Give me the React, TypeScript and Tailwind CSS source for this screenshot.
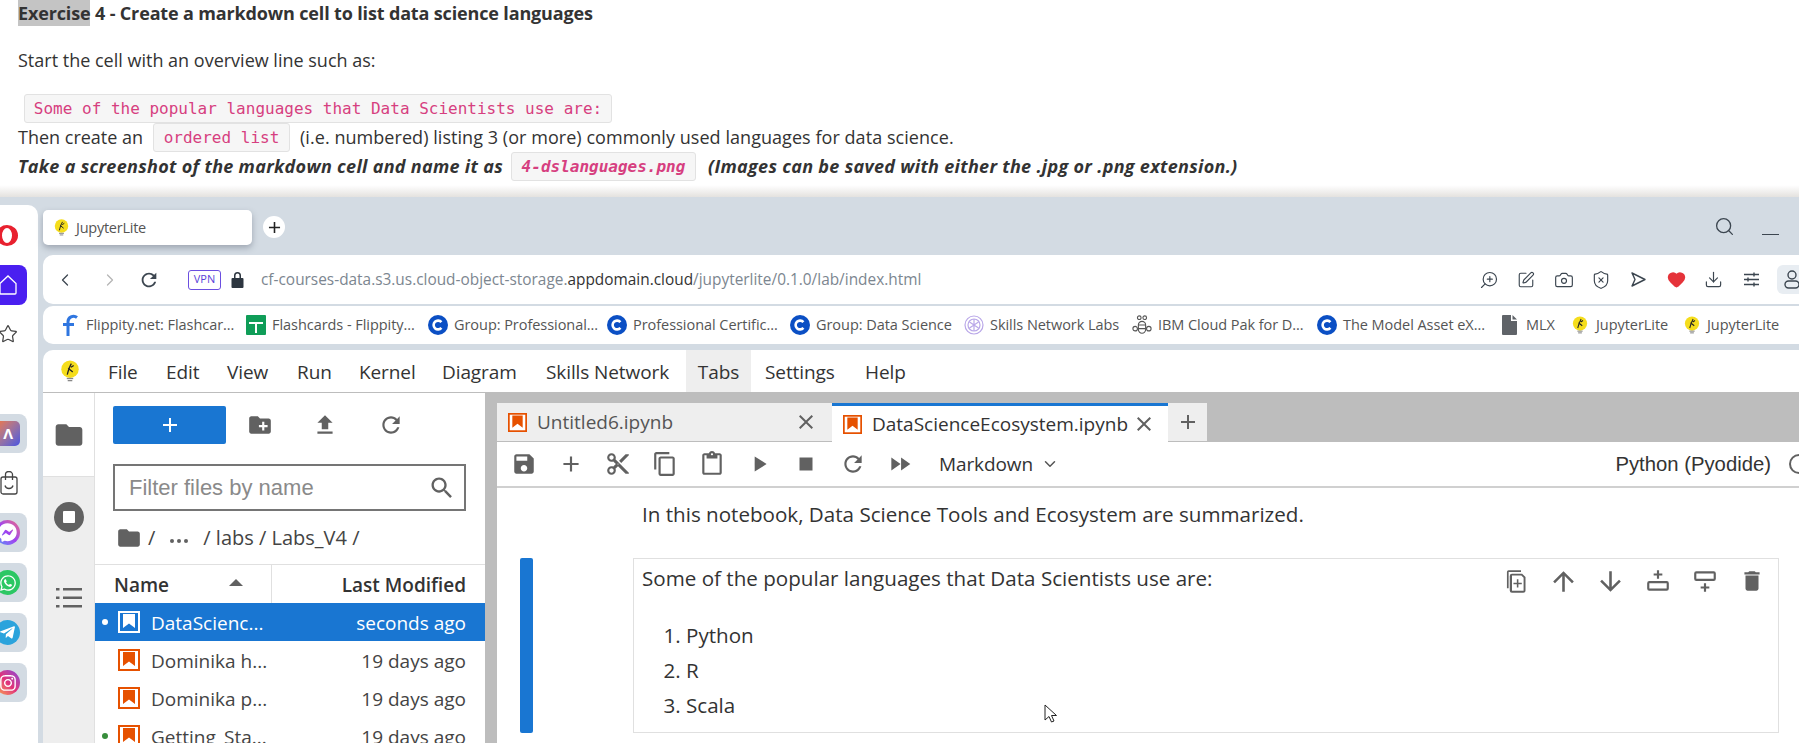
import { ChevronDown, ChevronLeft, ChevronRight, Download, Search, Camera, ShieldX, ZoomIn, SquarePen, Heart, Star } from 'lucide-react';
import { FaWhatsapp, FaTelegramPlane, FaFacebookMessenger, FaInstagram } from 'react-icons/fa';

const sans = "font-['Open_Sans',sans-serif]";
const chip = "h-[29px] pt-[1px] flex items-center justify-center bg-[#f6f6f6] border border-[#e2e2e2] rounded-[3px] text-[16px] tracking-normal text-[#d63f80] font-['DejaVu_Sans_Mono',monospace]";

const paths: Record<string, string> = {
    folder: 'M10 4H4c-1.1 0-2 .9-2 2v12c0 1.1.9 2 2 2h16c1.1 0 2-.9 2-2V8c0-1.1-.9-2-2-2h-8l-2-2z',
    newFolder: 'M20 6h-8l-2-2H4c-1.11 0-1.99.89-1.99 2L2 18c0 1.11.89 2 2 2h16c1.11 0 2-.89 2-2V8c0-1.11-.89-2-2-2zm-1 8h-3v3h-2v-3h-3v-2h3V9h2v3h3v2z',
    upload: 'M9 16h6v-6h4l-7-7-7 7h4zm-4 2h14v2H5z',
    refresh: 'M17.65 6.35C16.2 4.9 14.21 4 12 4c-4.42 0-7.99 3.58-7.99 8s3.57 8 7.99 8c3.73 0 6.84-2.55 7.73-6h-2.08c-.82 2.33-3.04 4-5.65 4-3.31 0-6-2.69-6-6s2.69-6 6-6c1.66 0 3.14.69 4.22 1.78L13 11h7V4l-2.35 2.35z',
    save: 'M17 3H5c-1.11 0-2 .9-2 2v14c0 1.1.89 2 2 2h14c1.1 0 2-.9 2-2V7l-4-4zm-5 16c-1.66 0-3-1.34-3-3s1.34-3 3-3 3 1.34 3 3-1.34 3-3 3zm3-10H5V5h10v4z',
    add: 'M19 13h-6v6h-2v-6H5v-2h6V5h2v6h6v2z',
    cut: 'M9.64 7.64c.23-.5.36-1.05.36-1.64 0-2.21-1.79-4-4-4S2 3.79 2 6s1.79 4 4 4c.59 0 1.14-.13 1.64-.36L10 12l-2.36 2.36C7.14 14.13 6.59 14 6 14c-2.21 0-4 1.79-4 4s1.79 4 4 4 4-1.79 4-4c0-.59-.13-1.14-.36-1.64L12 14l7 7h3v-1L9.64 7.64zM6 8c-1.1 0-2-.89-2-2s.9-2 2-2 2 .89 2 2-.9 2-2 2zm0 12c-1.1 0-2-.89-2-2s.9-2 2-2 2 .89 2 2-.9 2-2 2zm6-7.5c-.28 0-.5-.22-.5-.5s.22-.5.5-.5.5.22.5.5-.22.5-.5.5zM19 3l-6 6 2 2 7-7V3z',
    copy: 'M16 1H4c-1.1 0-2 .9-2 2v14h2V3h12V1zm3 4H8c-1.1 0-2 .9-2 2v14c0 1.1.9 2 2 2h11c1.1 0 2-.9 2-2V7c0-1.1-.9-2-2-2zm0 16H8V7h11v14z',
    paste: 'M19 2h-4.18C14.4.84 13.3 0 12 0c-1.3 0-2.4.84-2.82 2H5c-1.1 0-2 .9-2 2v16c0 1.1.9 2 2 2h14c1.1 0 2-.9 2-2V4c0-1.1-.9-2-2-2zm-7 0c.55 0 1 .45 1 1s-.45 1-1 1-1-.45-1-1 .45-1 1-1zm7 18H5V4h2v3h10V4h2v16z',
    run: 'M8 5v14l11-7z',
    stop: 'M6 6h12v12H6z',
    fastForward: 'M4 18l8.5-6L4 6v12zm9-12v12l8.5-6L13 6z',
    trash: 'M6 19c0 1.1.9 2 2 2h8c1.1 0 2-.9 2-2V7H6v12zM19 4h-3.5l-1-1h-5l-1 1H5v2h14V4z',
    up: 'M4 12l1.41 1.41L11 7.83V20h2V7.83l5.58 5.59L20 12l-8-8-8 8z',
    down: 'M20 12l-1.41-1.41L13 16.17V4h-2v12.17l-5.58-5.59L4 12l8 8 8-8z',
    search: 'M15.5 14h-.79l-.28-.27C15.41 12.59 16 11.11 16 9.5 16 5.91 13.09 3 9.5 3S3 5.91 3 9.5 5.91 16 9.5 16c1.61 0 3.09-.59 4.23-1.57l.27.28v.79l5 4.99L20.49 19l-4.99-5zm-6 0C7.01 14 5 11.99 5 9.5S7.01 5 9.5 5 14 7.01 14 9.5 11.99 14 9.5 14z',
    close: 'M19 6.41L17.59 5 12 10.59 6.41 5 5 6.41 10.59 12 5 17.59 6.41 19 12 13.41 17.59 19 19 17.59 13.41 12z',
    duplicate: 'M5 3v15H3.500V3.500A1.500 1.500 0 0 1 5 2h11v1.500H5zM8 5h9l3 3v12a2 2 0 0 1-2 2H8a2 2 0 0 1-2-2V7a2 2 0 0 1 2-2zm0 1.700V20.300h10.300V8.700L16.300 6.700H8zM12.300 10h1.400v3h3v1.400h-3v3h-1.400v-3h-3V13h3z',
    insertAbove: 'M11 2h2v3h3v2h-3v3h-2V7H8V5h3zM4 12h16a2 2 0 0 1 2 2v5a2 2 0 0 1-2 2H4a2 2 0 0 1-2-2v-5a2 2 0 0 1 2-2zm0 2v5h16v-5z',
    insertBelow: 'M4 3h16a2 2 0 0 1 2 2v5a2 2 0 0 1-2 2H4a2 2 0 0 1-2-2V5a2 2 0 0 1 2-2zm0 2v5h16V5zM11 14h2v3h3v2h-3v3h-2v-3H8v-2h3z',
};

const MuiIcon = ({ name, size = 24, className = 'fill-[#616161]' }: any) => (
    <svg width={size} height={size} viewBox="0 0 24 24" className={className}>
        <path d={paths[name]} />
    </svg>
);

const Bulb = ({ size = 18 }: any) => (
    <svg width={size} height={size} viewBox="0 0 24 24" className="shrink-0">
        <circle cx="12" cy="10" r="9.500" fill="#f5dd1c" />
        <path d="M9 16 C10 12 11 8 13.500 4 M10 9 L15 13 M13 8 L16 6" stroke="#222" strokeWidth="1.400" fill="none" />
        <rect x="8.500" y="19.500" width="7" height="1.400" fill="#888" />
        <rect x="9.500" y="21.800" width="5" height="1.400" fill="#888" />
    </svg>
);

const Coursera = () => (
    <svg width="20" height="20" viewBox="0 0 20 20" className="shrink-0">
        <circle cx="10" cy="10" r="10" fill="#0b4fc4" />
        <path d="M13.400 7.200a4.400 4.400 0 1 0 0 5.600" stroke="#fff" strokeWidth="2.600" fill="none" />
    </svg>
);

const NotebookIcon = ({ light = false, size = 22 }: any) => (
    <svg width={size} height={size} viewBox="0 0 22 22" className="shrink-0">
        <rect x="1" y="1" width="20" height="20" fill={light ? 'none' : '#fff'} stroke={light ? '#fff' : '#e65100'} strokeWidth="2" />
        <path d="M5 3h12v14l-6-4.500L5 17z" fill={light ? '#fff' : '#e65100'} />
    </svg>
);

const bookmarks = [
    {
        label: 'Flippity.net: Flashcar...', w: 'w-[186px]', icon: (
            <svg width="20" height="22" viewBox="0 0 20 22" fill="none" stroke="#2f76e0" strokeWidth="3" className="shrink-0">
                <path d="M8 22V8a5.500 5.500 0 0 1 9-4.500M3 10.500h11" />
            </svg>
        ),
    },
    {
        label: 'Flashcards - Flippity...', w: 'w-[182px]', icon: (
            <svg width="20" height="20" viewBox="0 0 20 20" className="shrink-0">
                <rect width="20" height="20" rx="1" fill="#0f9d58" />
                <path d="M3 7h14v2H11v9H9V9H3z" fill="#fff" />
            </svg>
        ),
    },
    { label: 'Group: Professional...', w: 'w-[179px]', icon: <Coursera /> },
    { label: 'Professional Certific...', w: 'w-[183px]', icon: <Coursera /> },
    { label: 'Group: Data Science', w: 'w-[174px]', icon: <Coursera /> },
    {
        label: 'Skills Network Labs', w: 'w-[168px]', icon: (
            <svg width="20" height="20" viewBox="0 0 20 20" className="shrink-0" fill="none" stroke="#b9a7e8" strokeWidth="1.200">
                <circle cx="10" cy="10" r="9" />
                <circle cx="10" cy="10" r="6" />
                <path d="M10 4v12M5.500 7l9 6M14.500 7l-9 6" />
            </svg>
        ),
    },
    {
        label: 'IBM Cloud Pak for D...', w: 'w-[185px]', icon: (
            <svg width="20" height="20" viewBox="0 0 22 22" className="shrink-0" fill="none" stroke="#555" strokeWidth="1.200">
                <circle cx="8" cy="3" r="2" />
                <circle cx="14" cy="3" r="2" />
                <rect x="7" y="7" width="8" height="13" rx="4" />
                <path d="M7 11h8M7 15h8" />
                <circle cx="3.500" cy="15" r="2.500" />
                <circle cx="18.500" cy="15" r="2.500" />
            </svg>
        ),
    },
    { label: 'The Model Asset eX...', w: 'w-[183px]', icon: <Coursera /> },
    {
        label: 'MLX', w: 'w-[70px]', icon: (
            <svg width="20" height="20" viewBox="0 0 20 20" className="shrink-0">
                <path d="M3 0h8v6h6v13a1 1 0 0 1-1 1H3a1 1 0 0 1-1-1V1a1 1 0 0 1 1-1zM12.500 0L17 4.500h-4.500z" fill="#5f6368" />
            </svg>
        ),
    },
    { label: 'JupyterLite', w: 'w-[113px]', icon: <span className="w-[20px] flex justify-center"><Bulb /></span> },
    { label: 'JupyterLite', w: 'w-[90px]', icon: <span className="w-[20px] flex justify-center"><Bulb /></span> },
];

const menus = [
    { label: 'File', w: 'w-[58px]' },
    { label: 'Edit', w: 'w-[61px]' },
    { label: 'View', w: 'w-[70px]' },
    { label: 'Run', w: 'w-[62px]' },
    { label: 'Kernel', w: 'w-[83px]' },
    { label: 'Diagram', w: 'w-[104px]' },
    { label: 'Skills Network', w: 'w-[140px]' },
];

const files = [
    { name: 'Dominika h...', time: '19 days ago' },
    { name: 'Dominika p...', time: '19 days ago' },
    { name: 'Getting_Sta...', time: '19 days ago', dot: true },
];

const toolbar = [
    { name: 'save', size: 26 },
    { name: 'add', size: 26 },
    { name: 'cut', size: 26 },
    { name: 'copy', size: 26 },
    { name: 'paste', size: 26 },
    { name: 'run', size: 26 },
    { name: 'stop', size: 26 },
    { name: 'refresh', size: 26 },
    { name: 'fastForward', size: 26 },
];

const cellTools = [
    { name: 'duplicate', size: 27 },
    { name: 'up', size: 31 },
    { name: 'down', size: 31 },
    { name: 'insertAbove', size: 26 },
    { name: 'insertBelow', size: 26 },
    { name: 'trash', size: 26 },
];

const AppTile = ({ children }: any) => (
    <div className="w-[27px] h-[39px] bg-[#d3dbe3] rounded-r-[8px] flex items-center justify-end pr-[7px] overflow-hidden">
        {children}
    </div>
);

const BrowserIcon = ({ children }: any) => (
    <div className="w-[37.5px] flex items-center justify-center text-[#3c4650]">{children}</div>
);

function App() {
    return (
        <div className={`w-[1799px] h-[743px] overflow-hidden flex flex-col bg-white text-[#212529] ${sans}`}>

            {/* Instructions above the screenshot */}
            <section className="h-[197px] shrink-0 pl-[18px] text-[18px] bg-gradient-to-b from-white from-[94%] to-[#e4e2df]">
                <h2 className="h-[26px] leading-[26px] font-bold tracking-[-0.15px] text-[#333]">
                    <span className="bg-[#c4c4c4] inline-block">Exercise</span> 4 - Create a markdown cell to list data science languages
                </h2>
                <p className="mt-[21px] h-[26px] leading-[26px] text-[#333]">Start the cell with an overview line such as:</p>
                <div className={`mt-[21px] ml-[6px] w-[588px] ${chip}`}>
                    Some of the popular languages that Data Scientists use are:
                </div>
                <div className="h-[29px] flex items-center text-[#333]">
                    <span className="w-[135px]">Then create an</span>
                    <code className={`w-[137px] ${chip}`}>ordered list</code>
                    <span className="ml-[10px] tracking-[0.05px]">(i.e. numbered) listing 3 (or more) commonly used languages for data science.</span>
                </div>
                <div className="h-[29px] flex items-center font-bold italic tracking-[0.3px] text-[#333]">
                    <span className="w-[493px] whitespace-nowrap">Take a screenshot of the markdown cell and name it as</span>
                    <code className={`w-[185px] ${chip}`}>4-dslanguages.png</code>
                    <span className="ml-[12px]">(Images can be saved with either the .jpg or .png extension.)</span>
                </div>
            </section>

            {/* Browser window */}
            <div className="flex-1 flex bg-[#d3dbe3] min-h-0">

                {/* Opera sidebar */}
                <aside className="w-[38px] mt-[8px] shrink-0 bg-white rounded-tr-[10px] flex flex-col overflow-hidden">
                    <div className="h-[60px] flex items-center justify-end pr-[20px]">
                        <div className="w-[22px] h-[21px] shrink-0 rounded-[50%] border-x-[6px] border-y-[3px] border-[#e8212f]" />
                    </div>
                    <div className="w-[27px] h-[40px] bg-[#4a1ff0] rounded-r-[8px] flex items-center justify-end pr-[9px] overflow-hidden">
                        <svg width="20" height="22" viewBox="0 0 20 22" fill="none" stroke="#fff" strokeWidth="1.300" className="shrink-0">
                            <path d="M2 9.500L10 2l8 7.500V19a1 1 0 0 1-1 1H3a1 1 0 0 1-1-1z" />
                        </svg>
                    </div>
                    <div className="mt-[17px] h-[24px] flex items-center justify-start">
                        <Star size={20} strokeWidth={1.500} className="text-[#444] -ml-[2px]" />
                    </div>
                    <div className="mt-[68px] flex flex-col">
                        <AppTile>
                            <div className="w-[24px] h-[25px] rounded-[5px] bg-gradient-to-br from-[#f0763a] to-[#4a50e0] text-white text-[15px] font-bold flex items-center justify-center shrink-0">Λ</div>
                        </AppTile>
                        <div className="h-[60px] flex items-center">
                            <svg width="18" height="24" viewBox="0 0 18 24" fill="none" stroke="#444" strokeWidth="1.300" className="shrink-0">
                                <rect x="1" y="6" width="16" height="17" rx="2" />
                                <path d="M5.500 9V3.500a3.500 3 0 0 1 7 0V9M5 14.500c1 4 7 4 8 0" />
                            </svg>
                        </div>
                        <AppTile><div className="w-[25px] h-[25px] shrink-0 rounded-full bg-gradient-to-tr from-[#2f8ff8] via-[#a040f0] to-[#f0607a] flex items-center justify-center"><FaFacebookMessenger className="text-white text-[19px]" /></div></AppTile>
                        <div className="h-[11px]" />
                        <AppTile><div className="w-[25px] h-[25px] shrink-0 rounded-full bg-[#2cc764] flex items-center justify-center"><FaWhatsapp className="text-white text-[18px]" /></div></AppTile>
                        <div className="h-[11px]" />
                        <AppTile><div className="w-[25px] h-[25px] shrink-0 rounded-full bg-[#2ba3dc] flex items-center justify-center"><FaTelegramPlane className="text-white text-[17px]" /></div></AppTile>
                        <div className="h-[11px]" />
                        <AppTile><div className="w-[25px] h-[25px] shrink-0 rounded-full bg-gradient-to-tr from-[#f9a13a] via-[#e0307a] to-[#8a3ad8] flex items-center justify-center"><FaInstagram className="text-white text-[18px]" /></div></AppTile>
                    </div>
                </aside>

                <div className="flex-1 min-w-0 pl-[5px] flex flex-col">
                    {/* Tab strip */}
                    <div className="h-[58px] shrink-0 flex items-start pt-[13px]">
                        <div className="w-[209px] h-[35px] bg-white rounded-[5px] shadow-[0_3px_6px_rgba(60,70,85,0.35)] flex items-center pl-[10px] gap-[6px] text-[14.500px] tracking-[-0.25px] text-[#555]">
                            <Bulb size={17} />
                            JupyterLite
                        </div>
                        <div className="ml-[11px] mt-[6px] w-[22px] h-[22px] rounded-full bg-white flex items-center justify-center">
                            <MuiIcon name="add" size={19} className="fill-[#222]" />
                        </div>
                        <div className="flex-1" />
                        <Search size={21} strokeWidth={1.500} className="mt-[6px] text-[#3c4650]" />
                        <div className="ml-[27px] mr-[20px] mt-[24px] w-[17px] h-[1px] bg-[#3c4650]" />
                    </div>

                    {/* Address bar */}
                    <div className="h-[49px] shrink-0 bg-white rounded-l-[10px] flex items-center text-[#3c4650]">
                        <ChevronLeft size={20} strokeWidth={1.500} className="ml-[12px]" />
                        <ChevronRight size={20} strokeWidth={1.500} className="ml-[25px] text-[#b5b5b5]" />
                        <MuiIcon name="refresh" size={22} className="ml-[18px] fill-[#3c4650]" />
                        <div className="ml-[28px] w-[33px] h-[20px] border border-[#6b4fe0] rounded-[3px] flex items-center justify-center text-[11px] text-[#5b3fd8]">VPN</div>
                        <svg width="13" height="17" viewBox="0 0 13 17" className="ml-[10px] fill-[#2d3640] shrink-0">
                            <path d="M3 7V4.500a3.500 3.500 0 0 1 7 0V7h1.500a1 1 0 0 1 1 1v8a1 1 0 0 1-1 1h-10a1 1 0 0 1-1-1V8a1 1 0 0 1 1-1zm1.500 0h4V4.500a2 2 0 0 0-4 0z" />
                        </svg>
                        <div className="ml-[17px] flex-1 text-[15.400px] text-[#7c8690] whitespace-nowrap">
                            cf-courses-data.s3.us.cloud-object-storage.<span className="text-[#333]">appdomain.cloud</span>/jupyterlite/0.1.0/lab/index.html
                        </div>
                        <div className="flex items-center shrink-0">
                            <BrowserIcon><ZoomIn size={20} strokeWidth={1.400} className="-scale-x-100" /></BrowserIcon>
                            <BrowserIcon><SquarePen size={18} strokeWidth={1.500} /></BrowserIcon>
                            <BrowserIcon><Camera size={20} strokeWidth={1.400} /></BrowserIcon>
                            <BrowserIcon><ShieldX size={20} strokeWidth={1.400} /></BrowserIcon>
                            <BrowserIcon>
                                <svg width="17" height="17" viewBox="0 0 17 17" fill="none" stroke="currentColor" strokeWidth="1.400" strokeLinejoin="round">
                                    <path d="M2 2l13 6.500L2 15l3-6.500z" />
                                </svg>
                            </BrowserIcon>
                            <BrowserIcon><Heart size={19} className="fill-[#e5333a] text-[#e5333a]" /></BrowserIcon>
                            <BrowserIcon><Download size={19} strokeWidth={1.500} /></BrowserIcon>
                            <BrowserIcon>
                                <svg width="17" height="15" viewBox="0 0 17 15" fill="none" stroke="currentColor" strokeWidth="1.400">
                                    <path d="M1 2.500h15M1 7.500h15M1 12.500h15M11 0.500v4M5 5.500v4M11 10.500v4" />
                                </svg>
                            </BrowserIcon>
                            <div className="ml-[7px] w-[22px] h-[29px] bg-[#e8edf2] rounded-l-[6px] flex items-center justify-start pl-[7px] overflow-hidden">
                                <svg width="16" height="19" viewBox="0 0 16 19" fill="none" stroke="currentColor" strokeWidth="1.400" className="shrink-0">
                                    <circle cx="8" cy="5" r="4" />
                                    <rect x="1" y="11" width="14" height="7" rx="3.500" />
                                </svg>
                            </div>
                        </div>
                    </div>

                    {/* Bookmarks */}
                    <div className="h-[38px] mt-[2px] shrink-0 bg-white rounded-l-[10px] flex items-center pl-[17px] text-[14.500px] tracking-[-0.05px] text-[#555] whitespace-nowrap">
                        {bookmarks.map((b, i) => (
                            <div key={i} className={`${b.w} shrink-0 flex items-center gap-[6px]`}>
                                {b.icon}
                                <span>{b.label}</span>
                            </div>
                        ))}
                    </div>

                    {/* JupyterLite */}
                    <div className="mt-[6px] flex-1 min-h-0 bg-white rounded-tl-[10px] flex flex-col">
                        <div className="h-[43px] shrink-0 border-b border-[#bdbdbd] flex items-center text-[19px] tracking-[-0.1px] text-[#333]">
                            <div className="w-[65px] pl-[16px]"><Bulb size={22} /></div>
                            {menus.map(m => (
                                <div key={m.label} className={`${m.w} whitespace-nowrap pt-[2px]`}>{m.label}</div>
                            ))}
                            <div className="w-[65px] h-[42px] bg-[#eeeeee] pt-[2px] flex items-center justify-center">Tabs</div>
                            <div className="w-[100px] ml-[14px] pt-[2px]">Settings</div>
                            <div className="pt-[2px]">Help</div>
                        </div>

                        <div className="flex-1 min-h-0 flex">
                            {/* Activity bar */}
                            <div className="w-[52px] shrink-0 flex flex-col border-r border-[#e0e0e0]">
                                <div className="h-[83px] flex items-center justify-center">
                                    <MuiIcon name="folder" size={32} className="fill-[#616161]" />
                                </div>
                                <div className="flex-1 bg-[#eeeeee] border-t border-[#e0e0e0] flex flex-col items-center">
                                    <div className="mt-[25px] w-[30px] h-[30px] rounded-full bg-[#616161] flex items-center justify-center">
                                        <div className="w-[12px] h-[12px] bg-white rounded-[1px]" />
                                    </div>
                                    <svg width="26" height="22" viewBox="0 0 26 22" className="mt-[55px] fill-[#616161]">
                                        <rect x="0" y="1" width="3.500" height="2.500" />
                                        <rect x="7" y="1" width="19" height="2.500" />
                                        <rect x="0" y="9.500" width="3.500" height="2.500" />
                                        <rect x="7" y="9.500" width="19" height="2.500" />
                                        <rect x="0" y="18" width="3.500" height="2.500" />
                                        <rect x="7" y="18" width="19" height="2.500" />
                                    </svg>
                                </div>
                            </div>

                            {/* File browser */}
                            <div className="w-[390px] shrink-0 flex flex-col">
                                <div className="h-[51px] shrink-0 pt-[13px] pl-[18px] flex items-start">
                                    <div className="w-[113px] h-[38px] bg-[#1976d2] rounded-[2px] flex items-center justify-center">
                                        <MuiIcon name="add" size={24} className="fill-white" />
                                    </div>
                                    <div className="w-[68px] h-[38px] flex items-center justify-center"><MuiIcon name="newFolder" size={26} /></div>
                                    <div className="w-[62px] h-[38px] flex items-center justify-center"><MuiIcon name="upload" size={26} /></div>
                                    <div className="w-[70px] h-[38px] flex items-center justify-center"><MuiIcon name="refresh" size={26} /></div>
                                </div>
                                <div className="mt-[20px] ml-[18px] w-[353px] h-[47px] shrink-0 border-2 border-[#757575] flex items-center pl-[14px] pr-[8px] font-['Liberation_Sans',sans-serif] text-[22px] text-[#8a8a8a]">
                                    <span className="flex-1">Filter files by name</span>
                                    <MuiIcon name="search" size={28} />
                                </div>
                                <div className="h-[53px] shrink-0 pl-[22px] flex items-center text-[20px] text-[#444] whitespace-nowrap">
                                    <MuiIcon name="folder" size={26} className="fill-[#616161] -ml-[1px]" />
                                    <span className="ml-[6px]">/</span>
                                    <svg width="20" height="6" viewBox="0 0 20 6" className="ml-[14px] mt-[6px] fill-[#616161]">
                                        <circle cx="3" cy="3" r="2" />
                                        <circle cx="10" cy="3" r="2" />
                                        <circle cx="17" cy="3" r="2" />
                                    </svg>
                                    <span className="ml-[14px]">/ labs / Labs_V4 /</span>
                                </div>
                                <div className="h-[39px] shrink-0 border-t border-[#e0e0e0] flex text-[19px] font-semibold text-[#333]">
                                    <div className="w-[177px] flex items-center pl-[19px] pt-[3px] border-r border-[#e0e0e0]">
                                        <span className="flex-1">Name</span>
                                        <div className="mr-[28px] mb-[6px] w-0 h-0 border-x-[7px] border-x-transparent border-b-[7px] border-b-[#616161]" />
                                    </div>
                                    <div className="flex-1 flex items-center justify-end pr-[19px] pt-[3px]">Last Modified</div>
                                </div>
                                <div className="h-[38px] shrink-0 bg-[#1976d2] text-white flex items-center text-[19px]">
                                    <div className="w-[6px] h-[6px] rounded-full bg-white ml-[7px]" />
                                    <div className="ml-[10px]"><NotebookIcon light /></div>
                                    <span className="ml-[11px] pt-[3px] flex-1">DataScienc...</span>
                                    <span className="pr-[19px] pt-[3px]">seconds ago</span>
                                </div>
                                {files.map(f => (
                                    <div key={f.name} className="h-[38px] shrink-0 flex items-center text-[19px] text-[#444]">
                                        <div className={`w-[6px] h-[6px] rounded-full ml-[7px] ${f.dot ? 'bg-[#388e3c]' : ''}`} />
                                        <div className="ml-[10px]"><NotebookIcon /></div>
                                        <span className="ml-[11px] pt-[3px] flex-1">{f.name}</span>
                                        <span className="pr-[19px] pt-[3px]">{f.time}</span>
                                    </div>
                                ))}
                            </div>

                            {/* Main area */}
                            <div className="flex-1 min-w-0 border-l-[12px] border-[#bdbdbd] flex flex-col">
                                <div className="h-[49px] shrink-0 bg-[#bdbdbd] flex items-end text-[19px] text-[#555]">
                                    <div className="w-[335px] h-[39px] bg-[#eeeeee] border-b border-[#bdbdbd] flex items-center pl-[11px] pr-[14px]">
                                        <NotebookIcon size={19} />
                                        <span className="ml-[10px] flex-1">Untitled6.ipynb</span>
                                        <MuiIcon name="close" size={24} />
                                    </div>
                                    <div className="w-[336px] h-[39px] bg-white border-t-[3px] border-[#1976d2] flex items-center pl-[11px] text-[#333]">
                                        <NotebookIcon size={19} />
                                        <span className="ml-[10px] flex-1 whitespace-nowrap">DataScienceEcosystem.ipynb</span>
                                        <MuiIcon name="close" size={24} className="fill-[#616161] mr-[12px]" />
                                    </div>
                                    <div className="w-[39px] h-[39px] bg-[#eeeeee] border-b border-[#bdbdbd] flex items-center justify-center">
                                        <MuiIcon name="add" size={24} />
                                    </div>
                                </div>

                                <div className="h-[46px] shrink-0 border-b-2 border-[#d0d0d0] flex items-center pl-[3px]">
                                    {toolbar.map(t => (
                                        <div key={t.name} className="w-[47px] flex items-center justify-center">
                                            <MuiIcon name={t.name} size={t.size} />
                                        </div>
                                    ))}
                                    <div className="ml-[16px] flex items-center text-[19px] tracking-[-0.1px] text-[#333]">
                                        Markdown
                                        <ChevronDown size={18} className="ml-[8px] text-[#555]" />
                                    </div>
                                    <div className="flex-1" />
                                    <span className="font-['Liberation_Sans',sans-serif] text-[20.300px] text-[#333] whitespace-nowrap">Python (Pyodide)</span>
                                    <div className="ml-[18px] w-[20px] h-[20px] shrink-0 -mr-[10px] rounded-full border-2 border-[#616161]" />
                                </div>

                                <div className="flex-1 min-h-0 overflow-hidden flex pl-[23px] text-[20.600px] text-[#333]">
                                    <div className="w-[13px] shrink-0 mt-[70px] h-[175px] bg-[#1976d2] rounded-[2px]" />
                                    <div className="w-[1146px] shrink-0 ml-[100px]">
                                        <p className="h-[70px] pl-[9px] pt-[12px] leading-[28px] whitespace-nowrap">In this notebook, Data Science Tools and Ecosystem are summarized.</p>
                                        <div className="relative h-[175px] border border-[#e0e0e0] pl-[8px] pt-[5px]">
                                            <p className="h-[28px] leading-[28px]">Some of the popular languages that Data Scientists use are:</p>
                                            <ol className="mt-[29px] pl-[44px] list-decimal">
                                                <li className="h-[35px] leading-[28px]">Python</li>
                                                <li className="h-[35px] leading-[28px]">R</li>
                                                <li className="h-[35px] leading-[28px]">Scala</li>
                                            </ol>
                                            {/* Cell toolbar floats over the cell */}
                                            <div className="absolute top-[7px] right-[3px] flex items-center h-[30px]">
                                                {cellTools.map(t => (
                                                    <div key={t.name} className="w-[47px] flex items-center justify-center">
                                                        <MuiIcon name={t.name} size={t.size} />
                                                    </div>
                                                ))}
                                            </div>
                                            {/* Mouse pointer */}
                                            <svg width="14" height="20" viewBox="0 0 14 20" className="absolute left-[410px] top-[145px]">
                                                <path d="M1 1v15l4-3.500 2.500 5.500 2.500-1-2.500-5.500h5z" fill="#fff" stroke="#222" strokeWidth="1" />
                                            </svg>
                                        </div>
                                    </div>
                                </div>
                            </div>
                        </div>
                    </div>
                </div>
            </div>
        </div>
    );
}

export default App;
